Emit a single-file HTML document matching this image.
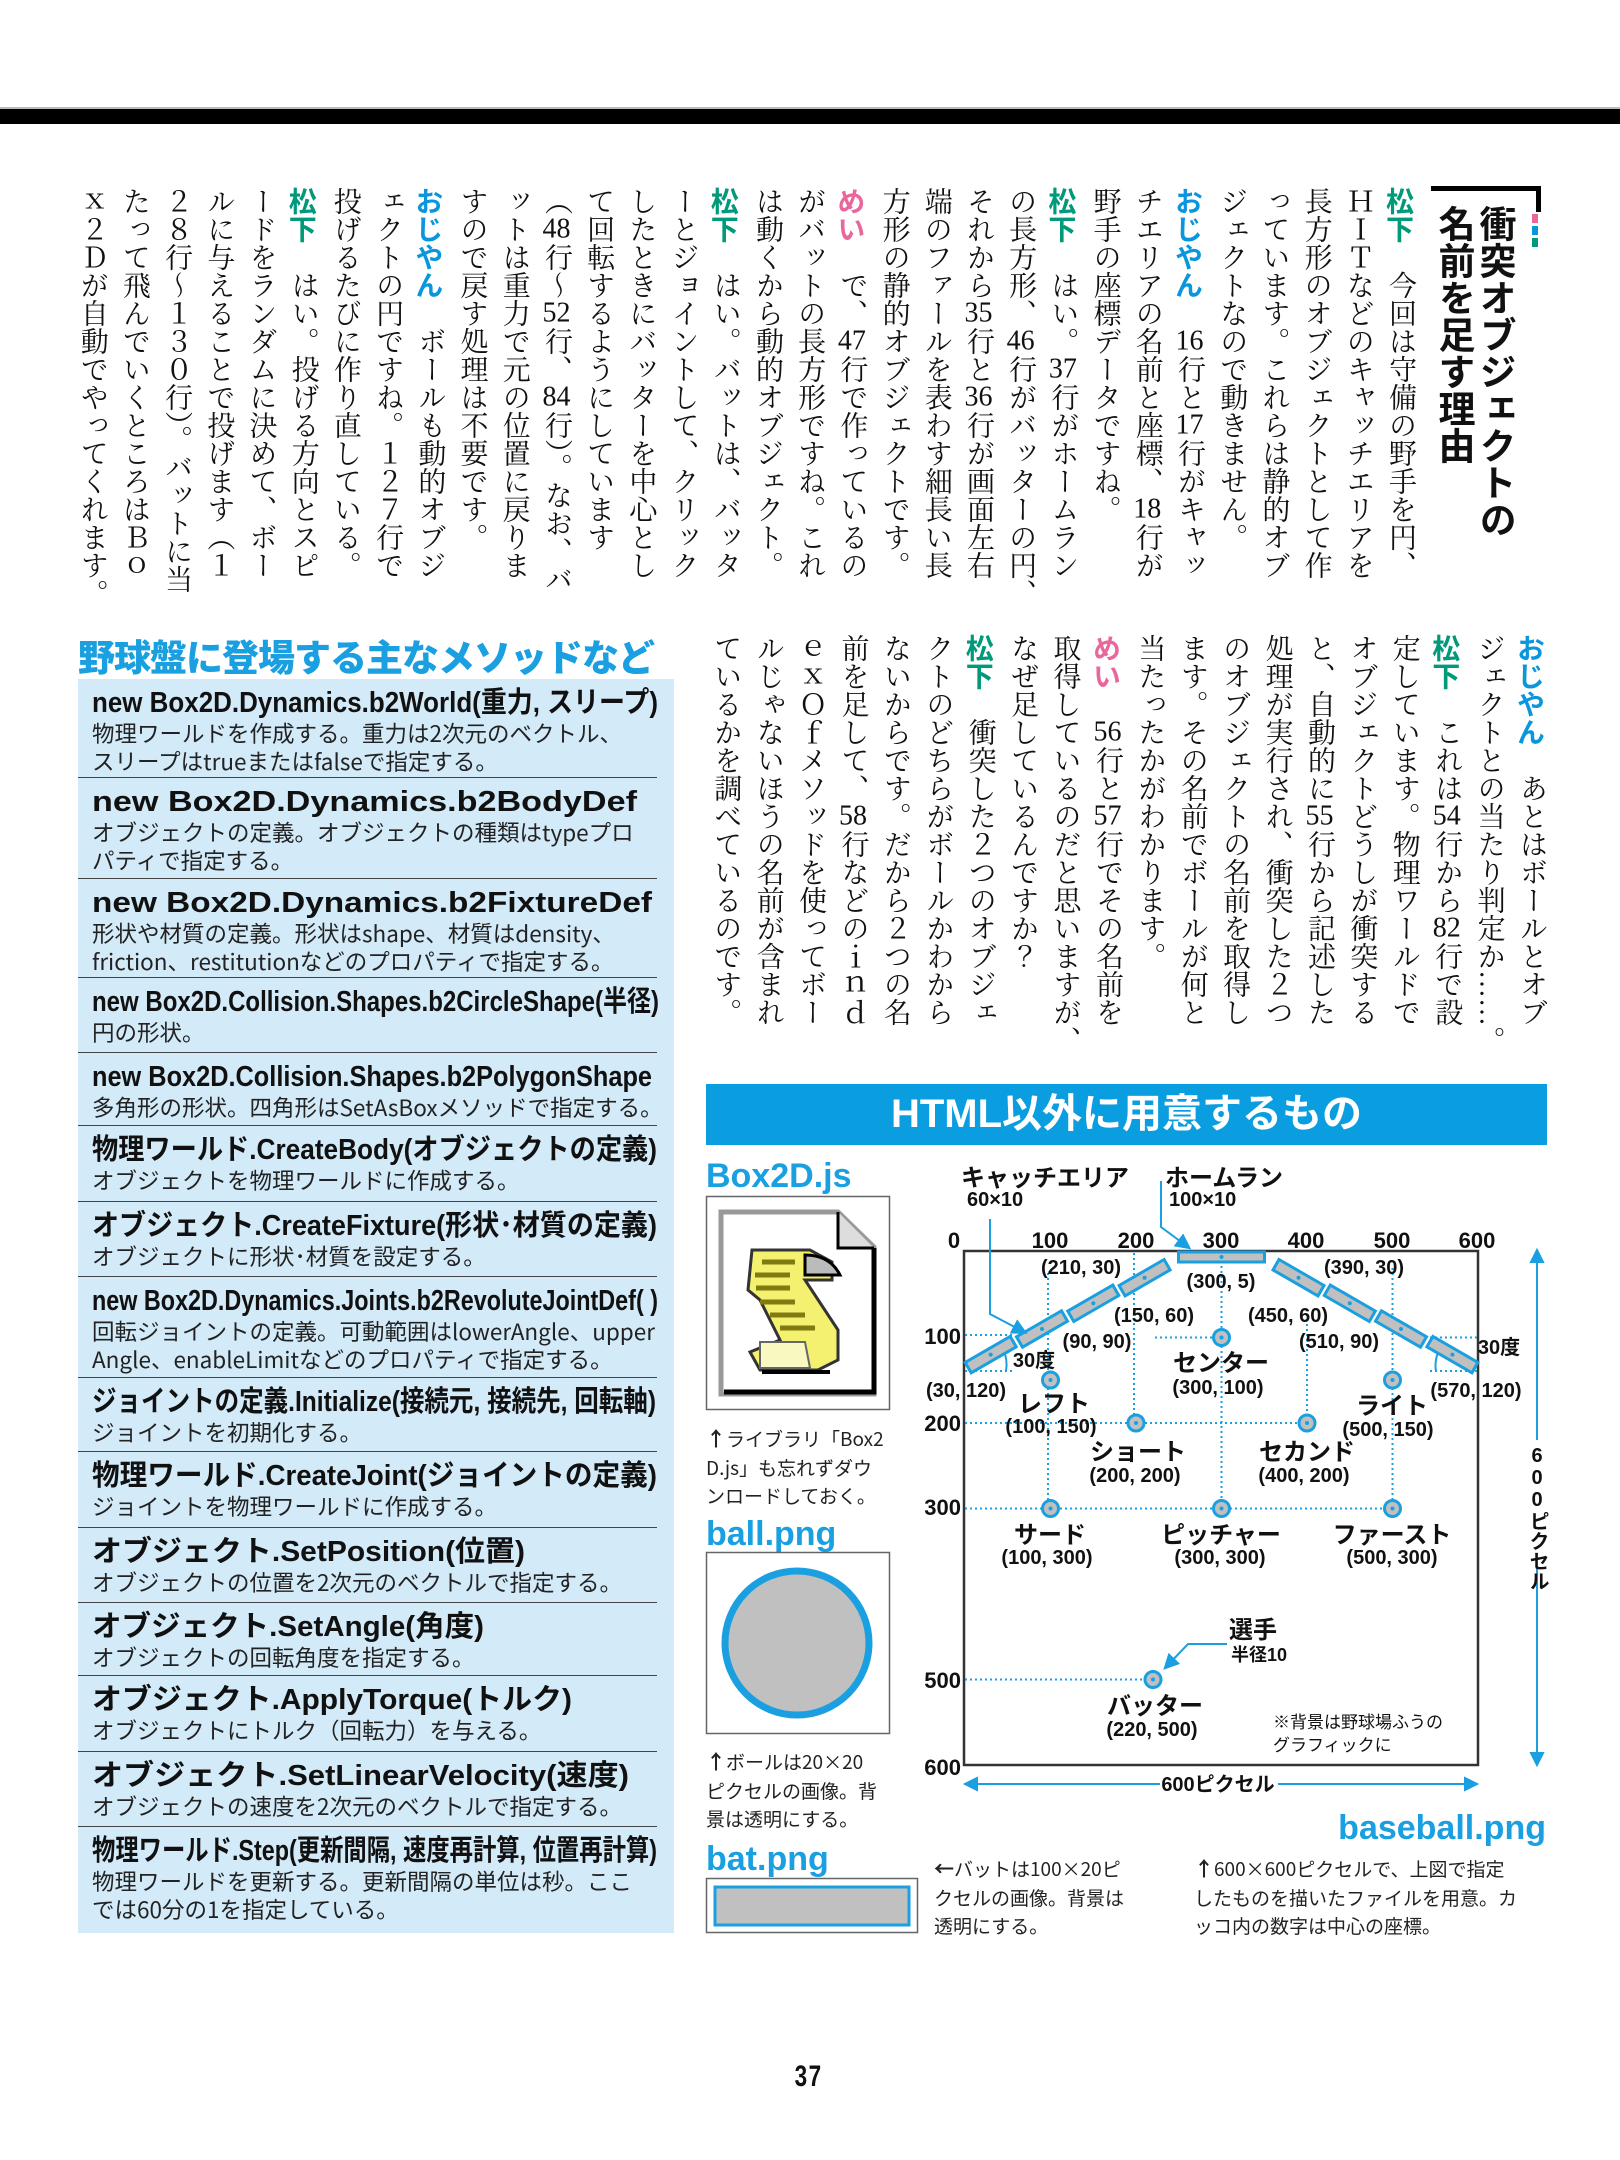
<!DOCTYPE html>
<html lang="ja"><head><meta charset="utf-8">
<style>
*{margin:0;padding:0;box-sizing:border-box}
html,body{width:1620px;height:2160px;background:#fff;overflow:hidden}
body{position:relative;font-family:"Liberation Sans","Noto Sans CJK JP",sans-serif;color:#111}
.abs{position:absolute}
.vt{position:absolute;writing-mode:vertical-rl;text-orientation:mixed;white-space:nowrap;font-family:"Liberation Serif","Noto Serif CJK JP","Noto Serif CJK SC",serif;font-size:28px;color:#111}
.tcy{text-combine-upright:all}
.g{color:#00997a;font-family:"Noto Sans CJK JP",sans-serif;font-weight:bold}
.b{color:#0a96dc;font-family:"Noto Sans CJK JP",sans-serif;font-weight:bold}
.p{color:#e9679c;font-family:"Noto Sans CJK JP",sans-serif;font-weight:bold}
.box{position:absolute;left:78px;top:679px;width:596px;height:1254px;background:#d3eaf8}
.en{position:absolute;left:0;width:579px;border-bottom:1.5px solid #444;padding:8px 0 0 14px}
.en:last-child{border-bottom:none}
.t{display:inline-block;white-space:nowrap;font-weight:bold;font-size:29px;line-height:32px;transform-origin:0 50%}
.d{font-size:22.5px;line-height:28px;white-space:nowrap;font-family:"Noto Sans CJK JP",sans-serif;color:#222}
.lbl{position:absolute;color:#1a9fe0;font-weight:bold;font-size:34px;line-height:34px;font-family:"Liberation Sans",sans-serif}
.cap{position:absolute;font-family:"Noto Sans CJK JP",sans-serif;font-size:19px;line-height:28.5px;color:#222;white-space:nowrap}
svg text{font-family:"Liberation Sans","Noto Sans CJK JP",sans-serif;font-weight:bold;fill:#111}
</style></head><body>

<div class="abs" style="left:0;top:107px;width:1620px;height:2px;background:#bbb"></div>
<div class="abs" style="left:0;top:109px;width:1620px;height:15px;background:#000"></div>

<!-- title bracket -->
<div class="abs" style="left:1431px;top:186px;width:110px;height:5px;background:#000"></div>
<div class="abs" style="left:1536px;top:186px;width:5px;height:26px;background:#000"></div>
<div class="abs" style="left:1532px;top:214px;width:6px;height:9px;background:#e9679c"></div>
<div class="abs" style="left:1532px;top:226px;width:6px;height:9px;background:#0a96dc"></div>
<div class="abs" style="left:1532px;top:238px;width:6px;height:9px;background:#00997a"></div>
<div class="vt" style="right:102px;top:205px;height:380px;font-size:37px;line-height:41px;font-weight:bold;font-family:'Noto Sans CJK JP',sans-serif">衝突オブジェクトの<br>名前を足す理由</div>

<div class="vt" style="left:71px;top:187px;width:1350px;height:400px;line-height:42.2px">
<span class="g">松下</span>　今回は守備の野手を円、<br>ＨＩＴなどのキャッチエリアを<br>長方形のオブジェクトとして作<br>っています。これらは静的オブ<br>ジェクトなので動きません。<br><span class="b">おじやん</span>　<span class="tcy">16</span>行と<span class="tcy">17</span>行がキャッ<br>チエリアの名前と座標、<span class="tcy">18</span>行が<br>野手の座標データですね。<br><span class="g">松下</span>　はい。<span class="tcy">37</span>行がホームラン<br>の長方形、<span class="tcy">46</span>行がバッターの円、<br>それから<span class="tcy">35</span>行と<span class="tcy">36</span>行が画面左右<br>端のファールを表わす細長い長<br>方形の静的オブジェクトです。<br><span class="p">めい</span>　で、<span class="tcy">47</span>行で作っているの<br>がバットの長方形ですね。これ<br>は動くから動的オブジェクト。<br><span class="g">松下</span>　はい。バットは、バッタ<br>ーとジョイントして、クリック<br>したときにバッターを中心とし<br>て回転するようにしています<br>（<span class="tcy">48</span>行〜<span class="tcy">52</span>行、<span class="tcy">84</span>行）。なお、バ<br>ットは重力で元の位置に戻りま<br>すので戻す処理は不要です。<br><span class="b">おじやん</span>　ボールも動的オブジ<br>ェクトの円ですね。１２７行で<br>投げるたびに作り直している。<br><span class="g">松下</span>　はい。投げる方向とスピ<br>ードをランダムに決めて、ボー<br>ルに与えることで投げます（１<br>２８行〜１３０行）。バットに当<br>たって飛んでいくところはＢｏ<br>ｘ２Ｄが自動でやってくれます。
</div>

<div class="vt" style="left:704px;top:634px;width:848px;height:400px;line-height:42.4px">
<span class="b">おじやん</span>　あとはボールとオブ<br>ジェクトとの当たり判定か……。<br><span class="g">松下</span>　これは<span class="tcy">54</span>行から<span class="tcy">82</span>行で設<br>定しています。物理ワールドで<br>オブジェクトどうしが衝突する<br>と、自動的に<span class="tcy">55</span>行から記述した<br>処理が実行され、衝突した２つ<br>のオブジェクトの名前を取得し<br>ます。その名前でボールが何と<br>当たったかがわかります。<br><span class="p">めい</span>　<span class="tcy">56</span>行と<span class="tcy">57</span>行でその名前を<br>取得しているのだと思いますが、<br>なぜ足しているんですか？<br><span class="g">松下</span>　衝突した２つのオブジェ<br>クトのどちらがボールかわから<br>ないからです。だから２つの名<br>前を足して、<span class="tcy">58</span>行などのｉｎｄ<br>ｅｘＯｆメソッドを使ってボー<br>ルじゃないほうの名前が含まれ<br>ているかを調べているのです。
</div>

<!-- methods box -->
<div class="abs" style="left:78px;top:634px;font-size:37px;line-height:42px;font-weight:900;color:#1a9fe0;font-family:'Noto Sans CJK JP',sans-serif;white-space:nowrap;letter-spacing:-1px">野球盤に登場する主なメソッドなど</div>
<div class="box">
<div class="en" style="top:0;height:99px"><span class="t" style="--w:566px">new Box2D.Dynamics.b2World(重力, スリープ)</span><div class="d">物理ワールドを作成する。重力は2次元のベクトル、<br>スリープはtrueまたはfalseで指定する。</div></div>
<div class="en" style="top:99px;height:101px"><span class="t" style="--w:545px">new Box2D.Dynamics.b2BodyDef</span><div class="d">オブジェクトの定義。オブジェクトの種類はtypeプロ<br>パティで指定する。</div></div>
<div class="en" style="top:200px;height:99px"><span class="t" style="--w:560px">new Box2D.Dynamics.b2FixtureDef</span><div class="d">形状や材質の定義。形状はshape、材質はdensity、<br>friction、restitutionなどのプロパティで指定する。</div></div>
<div class="en" style="top:299px;height:75px"><span class="t" style="--w:567px">new Box2D.Collision.Shapes.b2CircleShape(半径)</span><div class="d">円の形状。</div></div>
<div class="en" style="top:374px;height:73px"><span class="t" style="--w:560px">new Box2D.Collision.Shapes.b2PolygonShape</span><div class="d">多角形の形状。四角形はSetAsBoxメソッドで指定する。</div></div>
<div class="en" style="top:447px;height:76px"><span class="t" style="--w:565px">物理ワールド.CreateBody(オブジェクトの定義)</span><div class="d">オブジェクトを物理ワールドに作成する。</div></div>
<div class="en" style="top:523px;height:75px"><span class="t" style="--w:565px">オブジェクト.CreateFixture(形状･材質の定義)</span><div class="d">オブジェクトに形状･材質を設定する。</div></div>
<div class="en" style="top:598px;height:101px"><span class="t" style="--w:566px">new Box2D.Dynamics.Joints.b2RevoluteJointDef( )</span><div class="d">回転ジョイントの定義。可動範囲はlowerAngle、upper<br>Angle、enableLimitなどのプロパティで指定する。</div></div>
<div class="en" style="top:699px;height:74px"><span class="t" style="--w:564px">ジョイントの定義.Initialize(接続元, 接続先, 回転軸)</span><div class="d">ジョイントを初期化する。</div></div>
<div class="en" style="top:773px;height:76px"><span class="t" style="--w:565px">物理ワールド.CreateJoint(ジョイントの定義)</span><div class="d">ジョイントを物理ワールドに作成する。</div></div>
<div class="en" style="top:849px;height:75px"><span class="t" style="--w:433px">オブジェクト.SetPosition(位置)</span><div class="d">オブジェクトの位置を2次元のベクトルで指定する。</div></div>
<div class="en" style="top:924px;height:73px"><span class="t" style="--w:392px">オブジェクト.SetAngle(角度)</span><div class="d">オブジェクトの回転角度を指定する。</div></div>
<div class="en" style="top:997px;height:76px"><span class="t" style="--w:480px">オブジェクト.ApplyTorque(トルク)</span><div class="d">オブジェクトにトルク（回転力）を与える。</div></div>
<div class="en" style="top:1073px;height:75px"><span class="t" style="--w:537px">オブジェクト.SetLinearVelocity(速度)</span><div class="d">オブジェクトの速度を2次元のベクトルで指定する。</div></div>
<div class="en" style="top:1148px;height:106px"><span class="t" style="--w:565px">物理ワールド.Step(更新間隔, 速度再計算, 位置再計算)</span><div class="d">物理ワールドを更新する。更新間隔の単位は秒。ここ<br>では60分の1を指定している。</div></div>
</div>

<!-- right bottom -->
<div class="abs" style="left:706px;top:1084px;width:841px;height:61px;background:#0a9ee0;color:#fff;font-weight:bold;font-size:40px;line-height:61px;text-align:center;font-family:'Liberation Sans','Noto Sans CJK JP',sans-serif">HTML以外に用意するもの</div>
<div class="lbl" style="left:706px;top:1159px">Box2D.js</div>
<div class="lbl" style="left:706px;top:1517px">ball.png</div>
<div class="lbl" style="left:706px;top:1842px">bat.png</div>
<div class="lbl" style="right:74px;top:1811px">baseball.png</div>

<div class="cap" style="left:706px;top:1424px"><b style="font-size:20px">&#x2191;</b>ライブラリ「Box2<br>D.js」も忘れずダウ<br>ンロードしておく。</div>
<div class="cap" style="left:706px;top:1747px"><b style="font-size:20px">&#x2191;</b>ボールは20×20<br>ピクセルの画像。背<br>景は透明にする。</div>
<div class="cap" style="left:934px;top:1854px"><b style="font-size:20px">&#x2190;</b>バットは100×20ピ<br>クセルの画像。背景は<br>透明にする。</div>
<div class="cap" style="left:1194px;top:1854px"><b style="font-size:20px">&#x2191;</b>600×600ピクセルで、上図で指定<br>したものを描いたファイルを用意。カ<br>ッコ内の数字は中心の座標。</div>

<div class="abs" style="left:790px;top:2060px;font-size:30px;font-weight:bold;transform:scaleX(.75);letter-spacing:2px">37</div>

<svg class="abs" style="left:0;top:0" width="1620" height="2160" viewBox="0 0 1620 2160">
<defs>
<marker id="ah" markerWidth="8" markerHeight="8" refX="6" refY="4" orient="auto" markerUnits="strokeWidth"><path d="M0,0 L8,4 L0,8 z" fill="#1a9fe0"/></marker>
</defs>
<!-- icon boxes -->
<rect x="706.5" y="1196.5" width="183" height="213" fill="#fff" stroke="#666" stroke-width="1.5"/>
<path d="M721,1212 H838 L874,1247 V1394 H721 Z" fill="#fff" stroke="#999" stroke-width="5"/>
<path d="M724,1392 H874 V1248" fill="none" stroke="#000" stroke-width="5"/>
<path d="M838,1212 V1248 H874" fill="#ddd" stroke="#000" stroke-width="3"/>
<path d="M752,1250 H810 L832,1262 V1280 H805 L838,1330 V1360 L818,1370 H760 L750,1352 L780,1340 L760,1300 L748,1290 Z" fill="#f4f070" stroke="#333" stroke-width="3"/>
<path d="M805,1255 Q830,1255 840,1275 H805 Z" fill="#bbb" stroke="#000" stroke-width="3"/>
<g stroke="#807a10" stroke-width="5"><line x1="762" y1="1262" x2="795" y2="1262"/><line x1="755" y1="1275" x2="790" y2="1275"/><line x1="756" y1="1288" x2="790" y2="1288"/><line x1="760" y1="1302" x2="795" y2="1302"/><line x1="770" y1="1315" x2="805" y2="1315"/><line x1="780" y1="1328" x2="815" y2="1328"/></g>
<path d="M760,1342 H805 L810,1368 H760 Z" fill="#f8f8c0" stroke="#666" stroke-width="2"/>
<path d="M762,1372 H830" stroke="#000" stroke-width="4"/>

<rect x="706.5" y="1552.5" width="183" height="181" fill="#fff" stroke="#666" stroke-width="1.5"/>
<circle cx="797" cy="1643" r="72" fill="#c0c0c0" stroke="#1a9fe0" stroke-width="7"/>

<rect x="706.5" y="1878.5" width="211" height="54" fill="#fff" stroke="#666" stroke-width="1.5"/>
<rect x="715" y="1887" width="194" height="38" fill="#c0c0c0" stroke="#1a9fe0" stroke-width="3"/>

<!-- field -->
<rect x="964" y="1251" width="514" height="514" fill="#fff" stroke="#333" stroke-width="2.5"/>
<g stroke="#1a9fe0" stroke-width="2" stroke-dasharray="2 3" fill="none">
<line x1="965" y1="1423" x2="1307" y2="1423"/>
<line x1="965" y1="1508.5" x2="1392.5" y2="1508.5"/>
<line x1="965" y1="1679.5" x2="1153" y2="1679.5"/>
<line x1="1048" y1="1273" x2="1048" y2="1508.5"/>
<line x1="1134" y1="1253" x2="1134" y2="1423"/>
<line x1="1221.5" y1="1266" x2="1221.5" y2="1508.5"/>
<line x1="1307" y1="1314" x2="1307" y2="1423"/>
<line x1="1392.5" y1="1268" x2="1392.5" y2="1508.5"/>
<line x1="965" y1="1335" x2="1013" y2="1335"/>
<line x1="1155" y1="1337.5" x2="1215" y2="1337.5"/>
<line x1="1430" y1="1337.5" x2="1477" y2="1337.5"/>
<line x1="965" y1="1371" x2="1013" y2="1371"/>
<line x1="1430" y1="1371" x2="1477" y2="1371"/>
</g>
<path d="M1003,1348 Q1008,1360 1006,1371" stroke="#1a9fe0" stroke-width="2" fill="none"/>
<path d="M1440,1348 Q1434,1360 1436,1371" stroke="#1a9fe0" stroke-width="2" fill="none"/>
<g fill="#c0c0c0" stroke="#1a9fe0" stroke-width="3">
<rect x="1178.5" y="1252" width="86" height="10"/>
<g transform="translate(1144.6,1277.7) rotate(-30)"><rect x="-26" y="-6" width="52" height="12"/></g>
<g transform="translate(1093.3,1303.3) rotate(-30)"><rect x="-26" y="-6" width="52" height="12"/></g>
<g transform="translate(1042,1329) rotate(-30)"><rect x="-26" y="-6" width="52" height="12"/></g>
<g transform="translate(990.7,1354.6) rotate(-30)"><rect x="-26" y="-6" width="52" height="12"/></g>
<g transform="translate(1298.5,1277.7) rotate(30)"><rect x="-26" y="-6" width="52" height="12"/></g>
<g transform="translate(1349.8,1303.3) rotate(30)"><rect x="-26" y="-6" width="52" height="12"/></g>
<g transform="translate(1401,1329) rotate(30)"><rect x="-26" y="-6" width="52" height="12"/></g>
<g transform="translate(1452.4,1354.6) rotate(30)"><rect x="-26" y="-6" width="52" height="12"/></g>
<circle cx="1221.5" cy="1337.5" r="8"/><circle cx="1050.5" cy="1380" r="8"/><circle cx="1392.5" cy="1380" r="8"/>
<circle cx="1136" cy="1423" r="8"/><circle cx="1307" cy="1423" r="8"/>
<circle cx="1050.5" cy="1508.5" r="8"/><circle cx="1221.5" cy="1508.5" r="8"/><circle cx="1392.5" cy="1508.5" r="8"/>
<circle cx="1153" cy="1679.5" r="8"/>
</g>
<g fill="#1a9fe0">
<circle cx="1221.5" cy="1257" r="2"/><circle cx="1144.6" cy="1277.7" r="2"/><circle cx="1093.3" cy="1303.3" r="2"/><circle cx="1042" cy="1329" r="2"/><circle cx="990.7" cy="1354.6" r="2"/><circle cx="1298.5" cy="1277.7" r="2"/><circle cx="1349.8" cy="1303.3" r="2"/><circle cx="1401" cy="1329" r="2"/><circle cx="1452.4" cy="1354.6" r="2"/>
<circle cx="1221.5" cy="1337.5" r="2"/><circle cx="1050.5" cy="1380" r="2"/><circle cx="1392.5" cy="1380" r="2"/><circle cx="1136" cy="1423" r="2"/><circle cx="1307" cy="1423" r="2"/><circle cx="1050.5" cy="1508.5" r="2"/><circle cx="1221.5" cy="1508.5" r="2"/><circle cx="1392.5" cy="1508.5" r="2"/><circle cx="1153" cy="1679.5" r="2"/>
</g>
<!-- pointer arrows -->
<g stroke="#1a9fe0" stroke-width="2" fill="none">
<path d="M990,1219 V1314 L1024,1332" marker-end="url(#ah)"/>
<path d="M1161,1181 V1227 L1188,1247" marker-end="url(#ah)"/>
<path d="M1227,1644 H1188 L1166,1667" marker-end="url(#ah)"/>
<path d="M1537,1256 V1760"/><path d="M1531,1262 L1537,1250 L1543,1262 Z M1531,1753 L1537,1765 L1543,1753 Z" fill="#1a9fe0"/>
<path d="M970,1784 H1472"/><path d="M977,1778 L965,1784 L977,1790 Z M1465,1778 L1477,1784 L1465,1790 Z" fill="#1a9fe0"/>
</g>
<rect x="1520" y="1440" width="34" height="125" fill="#fff"/>
<rect x="1160" y="1772" width="118" height="24" fill="#fff"/>
<text x="1537" y="1445" font-size="20" style="writing-mode:vertical-rl;text-orientation:upright" text-anchor="start">600ピクセル</text>
<text x="1218" y="1791" font-size="20" text-anchor="middle">600ピクセル</text>

<g font-size="23" text-anchor="middle">
<text x="1045" y="1186" text-anchor="middle" font-size="24">キャッチエリア</text>
<text x="967" y="1206" text-anchor="start" font-size="20">60×10</text>
<text x="1224" y="1186" font-size="24">ホームラン</text>
<text x="1169" y="1206" text-anchor="start" font-size="20">100×10</text>
<text x="954" y="1248" font-size="22">0</text><text x="1050" y="1248" font-size="22">100</text><text x="1136" y="1248" font-size="22">200</text><text x="1221" y="1248" font-size="22">300</text><text x="1306" y="1248" font-size="22">400</text><text x="1392" y="1248" font-size="22">500</text><text x="1477" y="1248" font-size="22">600</text>
</g>
<g font-size="22" text-anchor="end">
<text x="961" y="1344">100</text><text x="961" y="1431">200</text><text x="961" y="1515">300</text><text x="961" y="1688">500</text><text x="961" y="1775">600</text>
</g>
<g font-size="20" text-anchor="middle">
<text x="1081" y="1274">(210, 30)</text><text x="1221" y="1288">(300, 5)</text><text x="1364" y="1274">(390, 30)</text>
<text x="1154" y="1322">(150, 60)</text><text x="1288" y="1322">(450, 60)</text>
<text x="1097" y="1348">(90, 90)</text><text x="1339" y="1348">(510, 90)</text>
<text x="1034" y="1367">30度</text><text x="1499" y="1354">30度</text>
<text x="966" y="1397">(30, 120)</text><text x="1476" y="1397">(570, 120)</text>
<text x="1218" y="1394">(300, 100)</text><text x="1051" y="1433">(100, 150)</text><text x="1388" y="1436">(500, 150)</text>
<text x="1135" y="1482">(200, 200)</text><text x="1304" y="1482">(400, 200)</text>
<text x="1047" y="1564">(100, 300)</text><text x="1220" y="1564">(300, 300)</text><text x="1392" y="1564">(500, 300)</text>
<text x="1152" y="1736">(220, 500)</text>
<text x="1246" y="1661" text-anchor="start" font-size="18" dx="-15">半径10</text>
</g>
<g font-size="24" text-anchor="middle">
<text x="1221" y="1371">センター</text><text x="1054" y="1412">レフト</text><text x="1392" y="1414">ライト</text>
<text x="1138" y="1460">ショート</text><text x="1307" y="1460">セカンド</text>
<text x="1050" y="1543">サード</text><text x="1221" y="1543">ピッチャー</text><text x="1392" y="1543">ファースト</text>
<text x="1253" y="1638">選手</text><text x="1155" y="1714">バッター</text>
</g>
<g font-size="17" font-weight="normal" style="font-weight:normal">
<text x="1273" y="1728" style="font-weight:normal">※背景は野球場ふうの</text>
<text x="1273" y="1751" style="font-weight:normal">グラフィックに</text>
</g>
</svg>

<script>
document.querySelectorAll('.t').forEach(function(e){
  var w=parseFloat(e.style.getPropertyValue('--w'));
  var r=e.getBoundingClientRect().width;
  if(r>0&&w>0){e.style.transform='scaleX('+(w/r)+')';}
});
</script>
</body></html>
